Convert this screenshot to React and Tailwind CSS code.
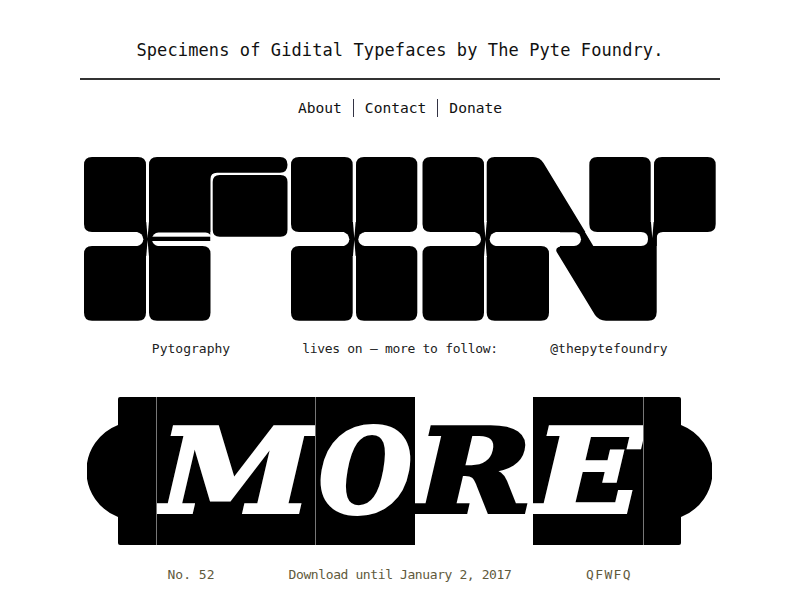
// helper for the block shapes of the specimen: rect with one radius per corner
const rr = (x0, y0, x1, y1, [tl, tr, br, bl]) =>
  `M${x0 + tl} ${y0}H${x1 - tr}Q${x1} ${y0} ${x1} ${y0 + tr}V${y1 - br}Q${x1} ${y1} ${x1 - br} ${y1}H${x0 + bl}Q${x0} ${y1} ${x0} ${y1 - bl}V${y0 + tl}Q${x0} ${y0} ${x0 + tl} ${y0}Z`;

const TOP = 157;
const BOT = 320.7;

const blocks = [
  rr(84, TOP, 146, 232, [8, 8, 0, 8]),
  rr(84, 246, 146, BOT, [8, 0, 8, 8]),
  rr(149, 246, 210.5, BOT, [0, 8, 8, 8]),
  rr(212.7, 175, 287.5, 236.7, [7, 7, 7, 7]),
  rr(291, TOP, 352.7, 232, [8, 8, 0, 8]),
  rr(291, 246, 352.7, BOT, [8, 0, 8, 8]),
  rr(356, TOP, 417.3, 232, [8, 8, 8, 0]),
  rr(356, 246, 417.3, BOT, [0, 8, 8, 8]),
  rr(422.5, TOP, 484, 232, [8, 8, 0, 8]),
  rr(422.5, 246, 484, BOT, [8, 0, 8, 8]),
  rr(486.7, 246, 549, BOT, [0, 8, 8, 8]),
  rr(589.3, TOP, 650.7, 232, [8, 8, 0, 8]),
  rr(654, TOP, 715.7, 232, [8, 8, 8, 0]),
  // top bar block with its long arm
  'M157 157H280Q287.5 157 287.5 164.8Q287.5 172.7 280 172.7H217Q210.5 172.7 210.5 179V241H149V165Q149 157 157 157Z',
  // upper half of the diagonal
  'M486.7 232V165Q486.7 157 494.7 157H533Q540 157 543.5 163L596.3 250H560V232Z',
  // lower half of the diagonal and the stem
  'M566 246Q554 246 556.7 252L595 315Q599 320.7 606 320.7H648Q656.7 320.7 656.7 312V238Q656.7 232 663 232H590V246Z',
];

const slots = [
  [120, 143.3],
  [329.3, 349.3],
  [358.3, 378.3],
  [461, 481],
  [489.7, 581],
];

const joints = [
  { cx: 147.6, x: 137.6, w: 20, lower: true },
  { cx: 354.3, x: 344.3, w: 20, lower: true },
  { cx: 485.4, x: 475.4, w: 20, lower: true },
  { cx: 652.3, x: 642.3, w: 14.4, lower: false },
];

function BlockSpecimen() {
  return (
    <svg viewBox="80 150 640 175" className="block w-[640px] h-[175px] mt-[31px] mx-auto">
      <g fill="#000">
        {blocks.map((d) => (
          <path key={d} d={d} />
        ))}
        {joints.map((j) => (
          <rect key={j.cx} x={j.x} y={222} width={j.w} height={j.lower ? 34 : 24} />
        ))}
      </g>
      <g fill="#fff">
        {slots.map(([a, b]) => (
          <rect key={a} x={a} y={232.3} width={b - a} height={13.7} rx={7} />
        ))}
        <rect x={152} y={232.5} width={60} height={13.5} rx={6.5} />
        <path d="M585 232L593.3 246H641Q648 246 648 239Q648 232 641 232Z" />
        {joints.map((j) => (
          <g key={j.cx}>
            <polygon points={`${j.cx - 1.4},221 ${j.cx + 1.4},221 ${j.cx},238`} />
            {j.lower && <polygon points={`${j.cx - 1.4},257 ${j.cx + 1.4},257 ${j.cx},240`} />}
          </g>
        ))}
      </g>
      <rect x={148} y={236.7} width={62.5} height={4.3} fill="#000" />
      <rect x={210.5} y={232} width={2.2} height={14} fill="#fff" />
    </svg>
  );
}

function Arc({ flip }) {
  return (
    <svg viewBox="0 0 31 92" className={flip ? 'w-[31px] h-[92px] block -scale-x-100' : 'w-[31px] h-[92px] block'}>
      <path d="M31 0A49.3 49.3 0 0 0 31 92Z" fill="#000" />
    </svg>
  );
}

function MoreBanner() {
  const letter = "font-['DejaVu_Serif',serif] font-bold italic text-[116px] leading-none";
  return (
    <div className="flex items-center justify-center h-[148px] mt-[38px] pr-px">
      <Arc />
      <div className="w-[38px] h-full bg-black rounded-l-[2px]" />
      <div className="w-[159px] h-full bg-black border-l border-[#777] flex items-center justify-center overflow-hidden">
        <span className={`${letter} text-white [-webkit-text-stroke:4px_white] [transform:scaleX(1.2)]`}>M</span>
      </div>
      <div className="w-[100px] h-full bg-black border-l border-[#777] flex items-center justify-center overflow-hidden">
        <span className={`${letter} text-white [-webkit-text-stroke:4px_white] [transform:scaleX(0.92)]`}>O</span>
      </div>
      <div className="w-[118px] h-full flex items-center justify-center overflow-hidden">
        <span className={`${letter} text-black [-webkit-text-stroke:4px_black] [transform:scaleX(1.2)]`}>R</span>
      </div>
      <div className="w-[110px] h-full bg-black flex items-center justify-center overflow-hidden">
        <span className={`${letter} text-white [-webkit-text-stroke:4px_white] [transform:scaleX(1.22)]`}>E</span>
      </div>
      <div className="w-[38px] h-full bg-black border-l border-[#777] rounded-r-[2px]" />
      <Arc flip />
    </div>
  );
}

export default function App() {
  return (
    <div className="h-[600px] overflow-hidden bg-white text-black font-['DejaVu_Sans_Mono',monospace]">
      <div className="w-[640px] mx-auto">
        <h1 className="pt-[37px] pb-[15px] text-center text-[17px] leading-[26px] font-normal tracking-[0.1px] text-[#111]">
          Specimens of Gidital Typefaces by The Pyte Foundry.
        </h1>
        <div className="h-[2px] bg-[#333]" />
        <nav className="mt-[17px] flex justify-center items-center text-[14.6px] leading-[22px] text-[#111]">
          <a>About</a>
          <span className="w-px h-[18px] bg-[#334] mx-[11px]" />
          <a>Contact</a>
          <span className="w-px h-[18px] bg-[#334] mx-[11px]" />
          <a>Donate</a>
        </nav>
      </div>
      <BlockSpecimen />
      <div className="grid grid-cols-3 w-[627px] mx-auto mt-[14px] text-center text-[13px] leading-[20px] text-[#222]">
        <span className="flex justify-center whitespace-nowrap">Pytography</span>
        <span className="flex justify-center whitespace-nowrap tracking-[-0.3px]">lives on — more to follow:</span>
        <span className="flex justify-center whitespace-nowrap">@thepytefoundry</span>
      </div>
      <MoreBanner />
      <div className="grid grid-cols-3 w-[627px] mx-auto mt-[20px] text-center text-[13px] leading-[20px] text-[#5f5a3c]">
        <span className="flex justify-center whitespace-nowrap">No. 52</span>
        <span className="flex justify-center whitespace-nowrap tracking-[-0.4px]">Download until January 2, 2017</span>
        <span className="flex justify-center whitespace-nowrap tracking-[1.4px]">QFWFQ</span>
      </div>
    </div>
  );
}
